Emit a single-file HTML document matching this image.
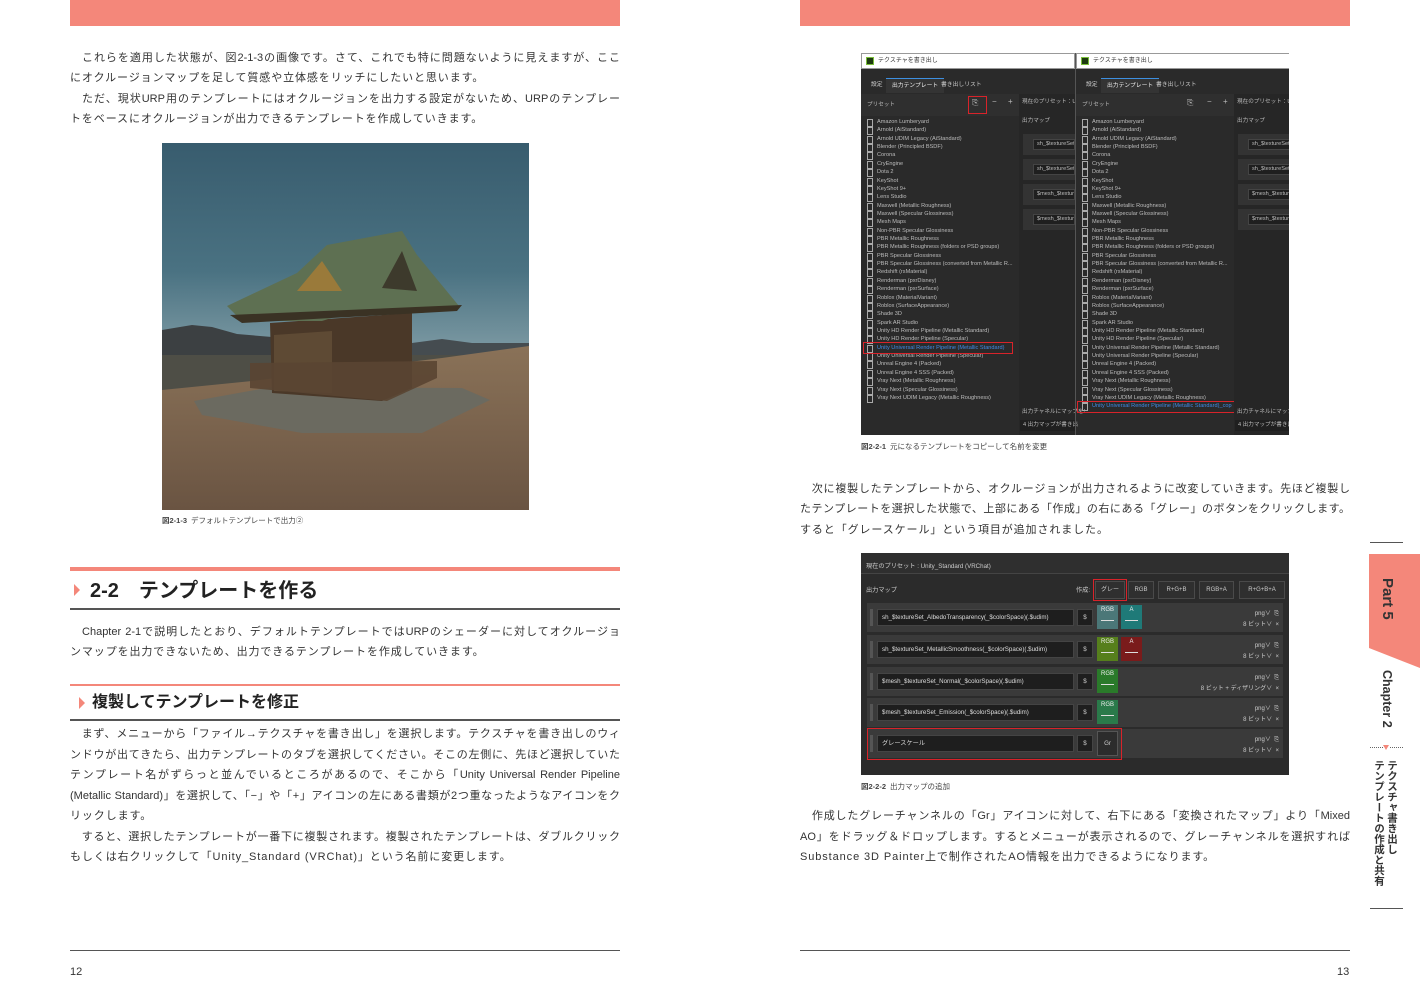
<!DOCTYPE html>
<html><head><meta charset="utf-8">
<style>
*{margin:0;padding:0;box-sizing:border-box}
body{width:1420px;height:1002px;background:#fff;position:relative;overflow:hidden;font-family:"Liberation Sans","Noto Sans CJK JP",sans-serif;color:#333}
.a{position:absolute}
.l{position:absolute;font-size:11px;line-height:14px;height:14px;white-space:nowrap;color:#333}
.j{text-align:justify;text-align-last:justify;width:550px}
.cap{position:absolute;font-size:7.5px;line-height:10px;color:#444;white-space:nowrap}
.cap b{font-weight:bold;margin-right:4px}
.s1{position:absolute;background:#2a2a2a;overflow:hidden;font-size:5.6px;color:#bcbcbc;line-height:8.37px;white-space:nowrap}
.pn{position:absolute;top:0;width:214px;height:382px}
.tb{position:absolute;left:0;top:0;width:214px;height:16px;background:#fff;border:1px solid #999;color:#333;font-size:6px;line-height:14px;padding-left:16px}
.tb i{position:absolute;left:4px;top:3px;width:8px;height:8px;background:#1d3a10;border:1px solid #7bbf3a}
.tabs{position:absolute;left:0;top:16px;width:214px;height:24px;background:#2a2a2a}
.tab{position:absolute;top:9px;height:15px;line-height:15px;font-size:5.8px;color:#ccc;padding:0 6px}
.tab.on{background:#343434;border-top:1px solid #3d8fe0;color:#eee}
.ph{position:absolute;top:41px;left:0;width:158px;height:22px;background:#2f2f2f}
.list{position:absolute;left:0;top:65px;width:158px}
.it{height:8.37px;position:relative;padding-left:16px}
.it:before{content:"";position:absolute;left:6px;top:1px;width:4px;height:6px;border:1px solid #aaa}
.it.b{color:#3f8ae6}
.rc{position:absolute;left:158px;top:41px;width:56px;height:341px;background:#262626}
.row1{position:absolute;left:4px;width:52px;height:21px;background:#333}
.row1 span{position:absolute;left:10px;top:5px;height:11px;width:42px;background:#1f1f1f;border:1px solid #444;line-height:9px;padding-left:3px;overflow:hidden}
.rb{position:absolute;border:1.5px solid #d8232a}
.s2{position:absolute;background:#2b2b2b;overflow:hidden;color:#ccc;font-size:6.2px;white-space:nowrap}
.btn{position:absolute;top:28px;height:18px;border:1px solid #4a4a4a;background:#2f2f2f;text-align:center;line-height:16px;font-size:6px;color:#ccc}
.rw{position:absolute;left:6px;width:416px;height:29px;background:#3a3a3a}
.rw .h{position:absolute;left:3px;top:6px;width:3px;height:17px;background:#555}
.rw .in{position:absolute;left:10px;top:6px;width:197px;height:17px;background:#1e1e1e;border:1px solid #444;line-height:15px;padding-left:4px;color:#ddd}
.rw .dl{position:absolute;left:210px;top:6px;width:16px;height:17px;background:#1e1e1e;border:1px solid #444;text-align:center;line-height:15px}
.sw{position:absolute;top:2px;width:21px;height:24px;color:#eee;text-align:center;font-size:6px;line-height:10px}
.sw:after{content:"";position:absolute;left:4px;right:4px;top:15px;height:1px;background:#ddd}
.rt{position:absolute;right:4px;text-align:right;font-size:6px;color:#ccc}
</style></head><body>

<!-- top bars -->
<div class="a" style="left:70px;top:0;width:550px;height:26px;background:#f4877a"></div>
<div class="a" style="left:800px;top:0;width:550px;height:26px;background:#f4877a"></div>

<!-- LEFT PAGE -->
<div class="l j" style="left:70px;top:51px">　これらを適用した状態が、図2-1-3の画像です。さて、これでも特に問題ないように見えますが、ここ</div>
<div class="l" style="left:70px;top:71px;letter-spacing:0.9px">にオクルージョンマップを足して質感や立体感をリッチにしたいと思います。</div>
<div class="l j" style="left:70px;top:92px">　ただ、現状URP用のテンプレートにはオクルージョンを出力する設定がないため、URPのテンプレー</div>
<div class="l" style="left:70px;top:112px;letter-spacing:0.9px">トをベースにオクルージョンが出力できるテンプレートを作成していきます。</div>

<!-- shrine image -->
<svg class="a" style="left:162px;top:143px" width="367" height="367" viewBox="0 0 367 367">
<defs>
<linearGradient id="sky" x1="0" y1="0" x2="0" y2="1"><stop offset="0" stop-color="#385c6e"/><stop offset="0.35" stop-color="#4a7282"/><stop offset="0.55" stop-color="#7896a0"/><stop offset="0.65" stop-color="#8ea4a8"/></linearGradient>
<linearGradient id="gr" x1="0" y1="0" x2="0" y2="1"><stop offset="0" stop-color="#8a7258"/><stop offset="1" stop-color="#6a5442"/></linearGradient>
</defs>
<rect width="367" height="367" fill="url(#sky)"/>
<path d="M0 187 L30 182 L50 184 L75 191 L110 194 L110 215 L0 215Z" fill="#3c4042"/>
<path d="M250 200 L280 196 L310 200 L367 200 L367 215 L250 215Z" fill="#454c50"/>
<rect x="0" y="212" width="367" height="35" fill="#4e4e46"/>
<path d="M0 247 L90 238 L280 215 L367 203 L367 367 L0 367Z" fill="url(#gr)"/>
<path d="M32 258 L110 244 L300 245 L328 257 L260 290 L140 290 L40 272Z" fill="#6b6a60"/>
<path d="M108 180 L250 170 L250 245 L220 258 L110 250Z" fill="#4a3828"/>
<path d="M112 192 L170 188 L170 250 L112 248Z" fill="#5e4a34"/>
<path d="M88 220 L275 218 L275 235 L225 258 L88 245Z" fill="#5a4532" opacity="0.9"/>
<path d="M65 163 L135 130 L165 102 L240 88 L255 112 L297 163 L260 170 L185 170 L160 178 L80 178Z" fill="#5e7052"/>
<path d="M135 148 L160 118 L180 148Z" fill="#9a7a3a"/>
<path d="M220 145 L240 108 L255 148Z" fill="#3d3a2c"/>
<path d="M68 172 L300 162 L295 168 L80 180Z" fill="#3a3224"/>
</svg>
<div class="cap" style="left:162px;top:516px"><b>図2-1-3</b>デフォルトテンプレートで出力②</div>

<div class="a" style="left:70px;top:567px;width:550px;height:4px;background:#f4877a"></div>
<div class="a" style="left:74px;top:584px;width:0;height:0;border-left:6px solid #f4877a;border-top:6px solid transparent;border-bottom:6px solid transparent"></div>
<div class="a" style="left:90px;top:578px;font-size:20px;line-height:26px;font-weight:bold;color:#222;white-space:nowrap">2-2　テンプレートを作る</div>
<div class="a" style="left:70px;top:608px;width:550px;height:2px;background:#555"></div>
<div class="l j" style="left:70px;top:625px">　Chapter 2-1で説明したとおり、デフォルトテンプレートではURPのシェーダーに対してオクルージョ</div>
<div class="l" style="left:70px;top:645px;letter-spacing:0.9px">ンマップを出力できないため、出力できるテンプレートを作成していきます。</div>

<div class="a" style="left:70px;top:684px;width:550px;height:2px;background:#f4877a"></div>
<div class="a" style="left:79px;top:697px;width:0;height:0;border-left:6px solid #f4877a;border-top:6px solid transparent;border-bottom:6px solid transparent"></div>
<div class="a" style="left:92px;top:693px;font-size:16px;line-height:20px;font-weight:bold;color:#222;white-space:nowrap">複製してテンプレートを修正</div>
<div class="a" style="left:70px;top:719px;width:550px;height:1.5px;background:#555"></div>
<div class="l j" style="left:70px;top:727px">　まず、メニューから「ファイル→テクスチャを書き出し」を選択します。テクスチャを書き出しのウィ</div>
<div class="l j" style="left:70px;top:748px">ンドウが出てきたら、出力テンプレートのタブを選択してください。そこの左側に、先ほど選択していた</div>
<div class="l j" style="left:70px;top:768px">テンプレート名がずらっと並んでいるところがあるので、そこから「Unity Universal Render Pipeline</div>
<div class="l j" style="left:70px;top:789px">(Metallic Standard)」を選択して、「−」や「+」アイコンの左にある書類が2つ重なったようなアイコンをク</div>
<div class="l" style="left:70px;top:809px;letter-spacing:0.9px">リックします。</div>
<div class="l j" style="left:70px;top:830px">　すると、選択したテンプレートが一番下に複製されます。複製されたテンプレートは、ダブルクリック</div>
<div class="l" style="left:70px;top:850px;letter-spacing:0.9px">もしくは右クリックして「Unity_Standard (VRChat)」という名前に変更します。</div>

<div class="a" style="left:70px;top:950px;width:550px;height:1px;background:#555"></div>
<div class="a" style="left:70px;top:966px;font-size:11px;color:#333">12</div>

<!-- RIGHT PAGE: screenshot 1 -->
<div class="s1" style="left:861px;top:53px;width:428px;height:382px">
 <div class="pn" style="left:0">
  <div class="tb"><i></i>テクスチャを書き出し</div>
  <div class="tabs"><div class="tab" style="left:4px">設定</div><div class="tab on" style="left:25px">出力テンプレート</div><div class="tab" style="left:74px">書き出しリスト</div></div>
  <div class="ph"><span class="a" style="left:6px;top:7px">プリセット</span><span class="a" style="left:111px;top:5px;font-size:8px">⎘</span><span class="a" style="left:131px;top:4px;font-size:8px">−</span><span class="a" style="left:147px;top:4px;font-size:8px">+</span></div>
  <div class="rb" style="left:107px;top:43px;width:19px;height:18px"></div>
  <div class="list">
   <div class="it">Amazon Lumberyard</div><div class="it">Arnold (AiStandard)</div><div class="it">Arnold UDIM Legacy (AiStandard)</div><div class="it">Blender (Principled BSDF)</div><div class="it">Corona</div><div class="it">CryEngine</div><div class="it">Dota 2</div><div class="it">KeyShot</div><div class="it">KeyShot 9+</div><div class="it">Lens Studio</div><div class="it">Maxwell (Metallic Roughness)</div><div class="it">Maxwell (Specular Glossiness)</div><div class="it">Mesh Maps</div><div class="it">Non-PBR Specular Glossiness</div><div class="it">PBR Metallic Roughness</div><div class="it">PBR Metallic Roughness (folders or PSD groups)</div><div class="it">PBR Specular Glossiness</div><div class="it">PBR Specular Glossiness (converted from Metallic R...</div><div class="it">Redshift (rsMaterial)</div><div class="it">Renderman (pxrDisney)</div><div class="it">Renderman (pxrSurface)</div><div class="it">Roblox (MaterialVariant)</div><div class="it">Roblox (SurfaceAppearance)</div><div class="it">Shade 3D</div><div class="it">Spark AR Studio</div><div class="it">Unity HD Render Pipeline (Metallic Standard)</div><div class="it">Unity HD Render Pipeline (Specular)</div><div class="it b">Unity Universal Render Pipeline (Metallic Standard)</div><div class="it">Unity Universal Render Pipeline (Specular)</div><div class="it">Unreal Engine 4 (Packed)</div><div class="it">Unreal Engine 4 SSS (Packed)</div><div class="it">Vray Next (Metallic Roughness)</div><div class="it">Vray Next (Specular Glossiness)</div><div class="it">Vray Next UDIM Legacy (Metallic Roughness)</div>
  </div>
  <div class="rb" style="left:2px;top:289px;width:150px;height:12px"></div>
  <div class="rc"><span class="a" style="left:3px;top:4px">現在のプリセット：Unit</span><span class="a" style="left:3px;top:23px">出力マップ</span>
   <div class="row1" style="top:40px"><span>sh_$textureSet_</span></div><div class="row1" style="top:65px"><span>sh_$textureSet_</span></div><div class="row1" style="top:90px"><span>$mesh_$textur</span></div><div class="row1" style="top:115px"><span>$mesh_$textur</span></div>
   <span class="a" style="left:3px;top:314px">出力チャネルにマップを!</span>
   <span class="a" style="left:1px;top:326px;width:55px;height:11px;background:#1f1f1f;padding-left:3px;line-height:11px">4 出力マップが書き出</span>
  </div>
 </div>
 <div class="pn" style="left:214px;border-left:1px solid #555">
  <div class="tb"><i></i>テクスチャを書き出し</div>
  <div class="tabs"><div class="tab" style="left:4px">設定</div><div class="tab on" style="left:25px">出力テンプレート</div><div class="tab" style="left:74px">書き出しリスト</div></div>
  <div class="ph"><span class="a" style="left:6px;top:7px">プリセット</span><span class="a" style="left:111px;top:5px;font-size:8px">⎘</span><span class="a" style="left:131px;top:4px;font-size:8px">−</span><span class="a" style="left:147px;top:4px;font-size:8px">+</span></div>
  <div class="list">
   <div class="it">Amazon Lumberyard</div><div class="it">Arnold (AiStandard)</div><div class="it">Arnold UDIM Legacy (AiStandard)</div><div class="it">Blender (Principled BSDF)</div><div class="it">Corona</div><div class="it">CryEngine</div><div class="it">Dota 2</div><div class="it">KeyShot</div><div class="it">KeyShot 9+</div><div class="it">Lens Studio</div><div class="it">Maxwell (Metallic Roughness)</div><div class="it">Maxwell (Specular Glossiness)</div><div class="it">Mesh Maps</div><div class="it">Non-PBR Specular Glossiness</div><div class="it">PBR Metallic Roughness</div><div class="it">PBR Metallic Roughness (folders or PSD groups)</div><div class="it">PBR Specular Glossiness</div><div class="it">PBR Specular Glossiness (converted from Metallic R...</div><div class="it">Redshift (rsMaterial)</div><div class="it">Renderman (pxrDisney)</div><div class="it">Renderman (pxrSurface)</div><div class="it">Roblox (MaterialVariant)</div><div class="it">Roblox (SurfaceAppearance)</div><div class="it">Shade 3D</div><div class="it">Spark AR Studio</div><div class="it">Unity HD Render Pipeline (Metallic Standard)</div><div class="it">Unity HD Render Pipeline (Specular)</div><div class="it">Unity Universal Render Pipeline (Metallic Standard)</div><div class="it">Unity Universal Render Pipeline (Specular)</div><div class="it">Unreal Engine 4 (Packed)</div><div class="it">Unreal Engine 4 SSS (Packed)</div><div class="it">Vray Next (Metallic Roughness)</div><div class="it">Vray Next (Specular Glossiness)</div><div class="it">Vray Next UDIM Legacy (Metallic Roughness)</div><div class="it b">Unity Universal Render Pipeline (Metallic Standard)_cop</div>
  </div>
  <div class="rb" style="left:1px;top:348px;width:159px;height:12px"></div>
  <div class="rc"><span class="a" style="left:3px;top:4px">現在のプリセット：Unit</span><span class="a" style="left:3px;top:23px">出力マップ</span>
   <div class="row1" style="top:40px"><span>sh_$textureSet_</span></div><div class="row1" style="top:65px"><span>sh_$textureSet_</span></div><div class="row1" style="top:90px"><span>$mesh_$textur</span></div><div class="row1" style="top:115px"><span>$mesh_$textur</span></div>
   <span class="a" style="left:3px;top:314px">出力チャネルにマップを!</span>
   <span class="a" style="left:1px;top:326px;width:55px;height:11px;background:#1f1f1f;padding-left:3px;line-height:11px">4 出力マップが書き出</span>
  </div>
 </div>
</div>
<div class="cap" style="left:861px;top:442px"><b>図2-2-1</b>元になるテンプレートをコピーして名前を変更</div>

<div class="l j" style="left:800px;top:482px">　次に複製したテンプレートから、オクルージョンが出力されるように改変していきます。先ほど複製し</div>
<div class="l j" style="left:800px;top:502px">たテンプレートを選択した状態で、上部にある「作成」の右にある「グレー」のボタンをクリックします。</div>
<div class="l" style="left:800px;top:523px;letter-spacing:0.9px">すると「グレースケール」という項目が追加されました。</div>

<!-- screenshot 2 -->
<div class="s2" style="left:861px;top:553px;width:428px;height:222px">
 <div class="a" style="left:0;top:0;width:428px;height:21px;background:#2f2f2f;border-bottom:1px solid #444"></div>
 <span class="a" style="left:5px;top:8px">現在のプリセット : Unity_Standard (VRChat)</span>
 <span class="a" style="left:5px;top:32px">出力マップ</span>
 <span class="a" style="left:215px;top:32px">作成:</span>
 <div class="btn" style="left:234px;width:30px">グレー</div>
 <div class="rb" style="left:232px;top:26px;width:34px;height:22px"></div>
 <div class="btn" style="left:267px;width:26px">RGB</div>
 <div class="btn" style="left:297px;width:37px">R+G+B</div>
 <div class="btn" style="left:338px;width:35px">RGB+A</div>
 <div class="btn" style="left:378px;width:46px">R+G+B+A</div>

 <div class="rw" style="top:50px"><div class="h"></div><div class="in">sh_$textureSet_AlbedoTransparency(_$colorSpace)(.$udim)</div><div class="dl">$</div>
  <div class="sw" style="left:230px;background:#4b7778">RGB</div><div class="sw" style="left:254px;background:#1f7a78">A</div>
  <div class="rt" style="top:5px">png∨ &nbsp;⎘</div><div class="rt" style="top:16px">8 ビット∨ &nbsp;×</div></div>
 <div class="rw" style="top:82px"><div class="h"></div><div class="in">sh_$textureSet_MetallicSmoothness(_$colorSpace)(.$udim)</div><div class="dl">$</div>
  <div class="sw" style="left:230px;background:#567f1c">RGB</div><div class="sw" style="left:254px;background:#7a1b1b">A</div>
  <div class="rt" style="top:5px">png∨ &nbsp;⎘</div><div class="rt" style="top:16px">8 ビット∨ &nbsp;×</div></div>
 <div class="rw" style="top:114px"><div class="h"></div><div class="in">$mesh_$textureSet_Normal(_$colorSpace)(.$udim)</div><div class="dl">$</div>
  <div class="sw" style="left:230px;background:#2a7a2a">RGB</div>
  <div class="rt" style="top:5px">png∨ &nbsp;⎘</div><div class="rt" style="top:16px">8 ビット + ディザリング∨ &nbsp;×</div></div>
 <div class="rw" style="top:145px"><div class="h"></div><div class="in">$mesh_$textureSet_Emission(_$colorSpace)(.$udim)</div><div class="dl">$</div>
  <div class="sw" style="left:230px;background:#2a7a4a">RGB</div>
  <div class="rt" style="top:5px">png∨ &nbsp;⎘</div><div class="rt" style="top:16px">8 ビット∨ &nbsp;×</div></div>
 <div class="rw" style="top:176px"><div class="h"></div><div class="in">グレースケール</div><div class="dl">$</div>
  <div class="a" style="left:230px;top:2px;width:21px;height:25px;background:#2c2c2c;border:1px solid #555;text-align:center;line-height:23px">Gr</div>
  <div class="rt" style="top:5px">png∨ &nbsp;⎘</div><div class="rt" style="top:16px">8 ビット∨ &nbsp;×</div></div>
 <div class="rb" style="left:6px;top:175px;width:255px;height:32px"></div>
</div>
<div class="cap" style="left:861px;top:782px"><b>図2-2-2</b>出力マップの追加</div>

<div class="l j" style="left:800px;top:809px">　作成したグレーチャンネルの「Gr」アイコンに対して、右下にある「変換されたマップ」より「Mixed</div>
<div class="l j" style="left:800px;top:830px">AO」をドラッグ＆ドロップします。するとメニューが表示されるので、グレーチャンネルを選択すれば</div>
<div class="l" style="left:800px;top:850px;letter-spacing:0.9px">Substance 3D Painter上で制作されたAO情報を出力できるようになります。</div>

<div class="a" style="left:800px;top:950px;width:550px;height:1px;background:#555"></div>
<div class="a" style="left:1337px;top:966px;font-size:11px;color:#333">13</div>

<!-- side tab -->
<div class="a" style="left:1370px;top:542px;width:33px;height:1px;background:#555"></div>
<svg class="a" style="left:1369px;top:554px" width="51" height="115"><polygon points="0,0 51,0 51,114 0,94" fill="#f4877a"/></svg>
<div class="a" style="left:1377px;top:578px;writing-mode:vertical-rl;font-size:15px;font-weight:bold;color:#333;line-height:20px">Part 5</div>
<div class="a" style="left:1377px;top:670px;writing-mode:vertical-rl;font-size:12.5px;font-weight:bold;color:#333;line-height:20px">Chapter 2</div>
<div class="a" style="left:1370px;top:747px;width:13px;border-top:1px dotted #666"></div>
<div class="a" style="left:1390px;top:747px;width:13px;border-top:1px dotted #666"></div>
<div class="a" style="left:1383px;top:745px;border-top:5px solid #f4877a;border-left:3px solid transparent;border-right:3px solid transparent"></div>
<div class="a" style="left:1372px;top:760px;writing-mode:vertical-rl;font-size:10.5px;font-weight:bold;color:#333;line-height:13px;white-space:nowrap">テクスチャ書き出し<br>テンプレートの作成と共有</div>
<div class="a" style="left:1370px;top:908px;width:33px;height:1px;background:#555"></div>
</body></html>
